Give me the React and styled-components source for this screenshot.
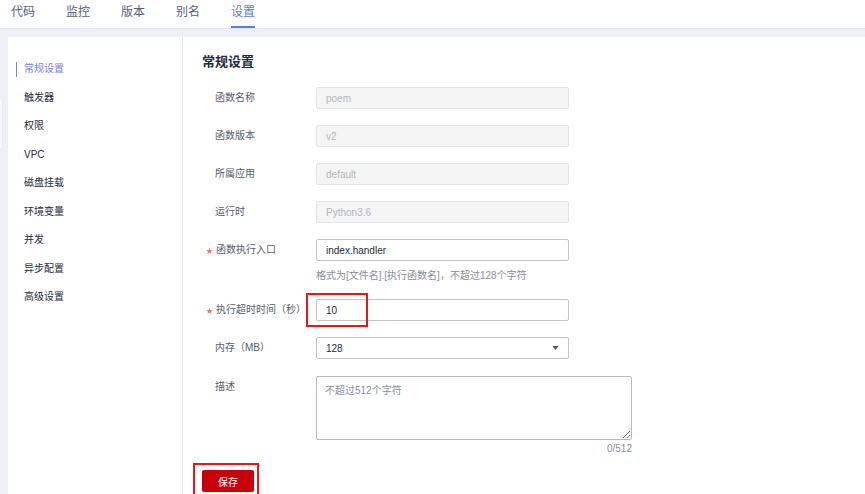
import { useState } from "react";
import styled, { createGlobalStyle } from "styled-components";

const GlobalStyle = createGlobalStyle`
  html, body {
    margin: 0;
    padding: 0;
    background: #ffffff;
    overflow: hidden;
  }
  * {
    box-sizing: border-box;
  }
  body {
    font-family: "Liberation Sans", "Noto Sans CJK SC", sans-serif;
    color: #252b3a;
  }
`;

const tabs = ["代码", "监控", "版本", "别名", "设置"];
const menu = [
  "常规设置",
  "触发器",
  "权限",
  "VPC",
  "磁盘挂载",
  "环境变量",
  "并发",
  "异步配置",
  "高级设置",
];

export default function App() {
  const [entry, setEntry] = useState("index.handler");
  const [timeout, setTimeoutValue] = useState("10");
  const [desc, setDesc] = useState("");

  return (
    <>
      <GlobalStyle />
      <Page>
        <TabBar>
          {tabs.map((t) => (
            <Tab key={t} active={t === "设置"}>
              {t}
            </Tab>
          ))}
        </TabBar>
        <Body>
          <Gutter>
            <Handle />
          </Gutter>
          <Sidebar>
            {menu.map((m) => (
              <MenuItem key={m} active={m === "常规设置"}>
                {m}
              </MenuItem>
            ))}
          </Sidebar>
          <Main>
            <Title>常规设置</Title>
            <Form>
              <Field>
                <Label>函数名称</Label>
                <Input disabled value="poem" readOnly />
              </Field>
              <Field>
                <Label>函数版本</Label>
                <Input disabled value="v2" readOnly />
              </Field>
              <Field>
                <Label>所属应用</Label>
                <Input disabled value="default" readOnly />
              </Field>
              <Field>
                <Label>运行时</Label>
                <Input disabled value="Python3.6" readOnly />
              </Field>
              <Field>
                <Label required>函数执行入口</Label>
                <Control>
                  <Input
                    value={entry}
                    onChange={(e) => setEntry(e.target.value)}
                  />
                  <Hint>格式为[文件名].[执行函数名]，不超过128个字符</Hint>
                </Control>
              </Field>
              <Field>
                <Label required>执行超时时间（秒）</Label>
                <Control>
                  <Input
                    value={timeout}
                    onChange={(e) => setTimeoutValue(e.target.value)}
                  />
                  <Mark />
                </Control>
              </Field>
              <Field>
                <Label>内存（MB）</Label>
                <Select>
                  <span>128</span>
                  <Caret viewBox="0 0 8 5">
                    <path d="M0 0h8L4 5z" fill="#575d6c" />
                  </Caret>
                </Select>
              </Field>
              <Field spaced>
                <Label>描述</Label>
                <Control>
                  <TextArea
                    placeholder="不超过512个字符"
                    maxLength={512}
                    value={desc}
                    onChange={(e) => setDesc(e.target.value)}
                  />
                  <Counter>{desc.length}/512</Counter>
                </Control>
              </Field>
            </Form>
            <SaveBox>
              <SaveButton>保存</SaveButton>
            </SaveBox>
          </Main>
        </Body>
      </Page>
    </>
  );
}

const Page = styled.div`
  width: 865px;
  height: 494px;
  display: flex;
  flex-direction: column;
`;

const TabBar = styled.div`
  height: 29px;
  display: flex;
  gap: 31px;
  padding-left: 11px;
  background: #ffffff;
  border-bottom: 1px solid #e3e5ec;
`;

const Tab = styled.div`
  height: 28px;
  padding-top: 4px;
  font-size: 12px;
  line-height: 16px;
  color: ${(p) => (p.active ? "#5e7ce0" : "#575d6c")};
  border-bottom: 2px solid ${(p) => (p.active ? "#5e7ce0" : "transparent")};
`;

const Body = styled.div`
  flex: 1;
  display: flex;
  background: #eff0f5;
  padding-top: 8px;
  min-height: 0;
`;

const Gutter = styled.div`
  width: 8px;
  padding-top: 60px;
`;

const Handle = styled.div`
  width: 3px;
  height: 53px;
  background: #f6f7fa;
  border: 1px solid #e8e9ee;
  border-left: none;
  border-radius: 0 3px 3px 0;
`;

const Sidebar = styled.div`
  width: 175px;
  background: #ffffff;
  border-right: 1px solid #e5e6ea;
  padding-top: 18px;
`;

const MenuItem = styled.div`
  position: relative;
  height: 28.5px;
  line-height: 28.5px;
  padding-left: 16px;
  font-size: 10px;
  color: ${(p) => (p.active ? "#6f86e3" : "#252b3a")};

  &::before {
    content: "";
    display: ${(p) => (p.active ? "block" : "none")};
    position: absolute;
    left: 8px;
    top: 7px;
    width: 1px;
    height: 15px;
    background: #6f86e3;
  }
`;

const Main = styled.div`
  flex: 1;
  background: #ffffff;
  padding: 17px 0 0 19px;
`;

const Title = styled.div`
  font-size: 13px;
  font-weight: 700;
  line-height: 16px;
  color: #252b3a;
  margin-bottom: 17px;
`;

const Form = styled.div`
  display: flex;
  flex-direction: column;
  gap: 16px;
`;

const Field = styled.div`
  display: flex;
  align-items: flex-start;
  margin-top: ${(p) => (p.spaced ? "1px" : "0")};
`;

const Label = styled.div`
  width: 114px;
  height: 22px;
  line-height: 22px;
  padding-left: ${(p) => (p.required ? "4px" : "13px")};
  font-size: 10px;
  color: #575d6c;
  white-space: nowrap;

  &::before {
    content: ${(p) => (p.required ? '"★"' : "none")};
    display: inline-block;
    color: #f66f6a;
    margin-right: 3px;
    font-size: 7px;
    vertical-align: top;
    line-height: 23px;
  }
`;

const Control = styled.div`
  position: relative;
  display: flex;
  flex-direction: column;
`;

const Input = styled.input`
  width: 253px;
  height: 22px;
  padding: 0 9px;
  border: 1px solid ${(p) => (p.disabled ? "#e3e4e7" : "#c2c4c9")};
  border-radius: 2px;
  background: ${(p) => (p.disabled ? "#f5f5f6" : "#ffffff")};
  font-family: "Liberation Sans", "Noto Sans CJK SC", sans-serif;
  font-size: 10px;
  color: ${(p) => (p.disabled ? "#b4b6bb" : "#252b3a")};
  outline: none;

  &:disabled {
    color: #b4b6bb;
    -webkit-text-fill-color: #b4b6bb;
  }
`;

const Hint = styled.div`
  margin-top: 8px;
  height: 14px;
  line-height: 14px;
  font-size: 10px;
  color: #8a8e99;
`;

const Mark = styled.div`
  position: absolute;
  left: -10px;
  top: -6px;
  width: 62px;
  height: 34px;
  border: 2px solid #e8161b;
  pointer-events: none;
`;

const Select = styled.div`
  width: 253px;
  height: 22px;
  padding: 0 9px;
  display: flex;
  align-items: center;
  justify-content: space-between;
  border: 1px solid #c2c4c9;
  border-radius: 2px;
  font-size: 10px;
  color: #252b3a;
`;

const Caret = styled.svg`
  width: 7px;
  height: 4px;
`;

const TextArea = styled.textarea`
  width: 316px;
  height: 64px;
  padding: 5px 8px;
  border: 1px solid #b9bbc1;
  border-radius: 2px;
  font-family: "Liberation Sans", "Noto Sans CJK SC", sans-serif;
  font-size: 10px;
  color: #252b3a;
  outline: none;
  resize: both;

  &::placeholder {
    color: #8a8e99;
  }
`;

const Counter = styled.div`
  text-align: right;
  font-size: 10px;
  line-height: 16px;
  margin-top: 1px;
  color: #8a8e99;
`;

const SaveBox = styled.div`
  display: inline-block;
  margin: 6px 0 0 -9px;
  padding: 5px 3px 10px 7px;
  border: 2px solid #e8161b;
`;

const SaveButton = styled.button`
  width: 52px;
  height: 22px;
  border: none;
  border-radius: 2px;
  background: #c7000b;
  color: #ffffff;
  font-family: "Liberation Sans", "Noto Sans CJK SC", sans-serif;
  font-size: 10px;
  cursor: pointer;
`;
